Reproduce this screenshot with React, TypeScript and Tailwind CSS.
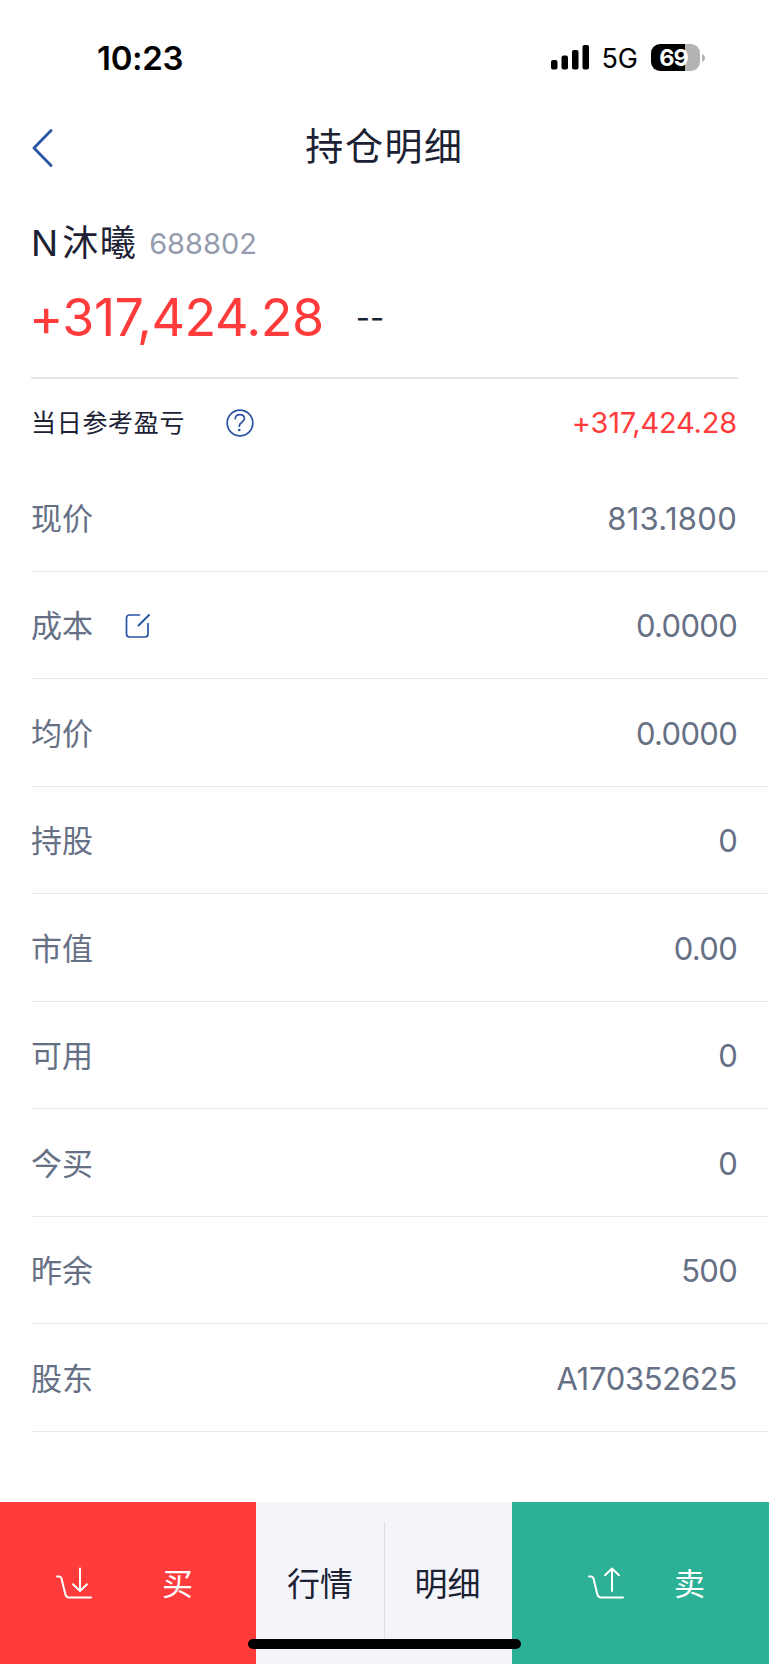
type DetailRow = {
  label: string
  value: string
  editable?: boolean
  valueClass?: string
}

const rows: DetailRow[] = [
  { label: '现价', value: '813.1800', valueClass: 'tracking-[0.3px]' },
  { label: '成本', value: '0.0000', editable: true },
  { label: '均价', value: '0.0000' },
  { label: '持股', value: '0' },
  { label: '市值', value: '0.00' },
  { label: '可用', value: '0' },
  { label: '今买', value: '0' },
  { label: '昨余', value: '500' },
  { label: '股东', value: 'A170352625', valueClass: 'tracking-[-0.3px]' },
]

const SignalIcon = () => (
  <svg width="38" height="25" viewBox="0 0 38 25" fill="#000">
    <rect x="0" y="15" width="6.5" height="9.5" rx="2" />
    <rect x="10.5" y="10.5" width="6.5" height="14" rx="2" />
    <rect x="21" y="5" width="6.5" height="19.5" rx="2" />
    <rect x="31.5" y="0" width="6.5" height="24.5" rx="2" />
  </svg>
)

const Battery = () => (
  <div className="flex items-center">
    <div className="flex h-[27px] w-[49px] items-center justify-center rounded-[9px] bg-[linear-gradient(90deg,#000_69%,#b3b3b3_69%)] pr-[4px] text-[23.5px] leading-[27px] font-bold tracking-[-1px] text-white">
      69
    </div>
    <svg width="3" height="8" viewBox="0 0 3 8" className="ml-[2px]" fill="#b3b3b3">
      <path d="M0 0C4 1.5 4 6.5 0 8Z" />
    </svg>
  </div>
)

const StatusBar = () => (
  <div className="flex h-[107px] items-start justify-between pt-[41px] pr-[64px] pl-[97px] text-black">
    <span className="pt-[1px] text-[33px] leading-[32px] font-semibold tracking-[-0.3px]">10:23</span>
    <div className="flex items-center">
      <SignalIcon />
      <span className="ml-[12px] pt-[3px] text-[27px] leading-[30px]">5G</span>
      <div className="ml-[13px]">
        <Battery />
      </div>
    </div>
  </div>
)

const HelpIcon = () => (
  <svg width="28" height="28" viewBox="0 0 28 28" fill="none" stroke="#2a55a5" strokeWidth="1.7" strokeLinecap="round">
    <circle cx="14" cy="14" r="12.8" />
    <path d="M9.2 9.8C9.4 7.2 11.2 5.7 13.8 5.7C16.5 5.7 18.4 7.3 18.4 9.8C18.4 12.7 13.3 13.4 13.3 17.2" />
    <circle cx="13.3" cy="21" r="1.3" fill="#2a55a5" stroke="none" />
  </svg>
)

const EditIcon = () => (
  <svg width="26" height="26" viewBox="0 0 26 26" fill="none" stroke="#2a55a5" strokeWidth="1.7" strokeLinecap="round">
    <path d="M14.5 2H4.5Q1.5 2 1.5 5V21Q1.5 24 4.5 24H20Q23 24 23 21V10.5" />
    <path d="M13.5 12.5L24 2" strokeWidth="2" />
  </svg>
)

const CartIcon = ({ direction }: { direction: 'in' | 'out' }) => (
  <svg width="36" height="32" viewBox="0 0 36 32" fill="none" stroke="#fff" strokeWidth="2" strokeLinecap="round" strokeLinejoin="round">
    <path d="M1 9.5H3.2Q5 9.5 5.5 11.5L9 26Q9.9 30.5 13 30.5H35" />
    {direction === 'in'
      ? <path d="M24 1.5V24M17 17.2L24 24L31 17.2" />
      : <path d="M24 24V1.5M17 8.3L24 1.5L31 8.3" />}
  </svg>
)

const Header = () => (
  <div className="flex h-[81px] items-center px-[32px] text-[#1c2233]">
    <svg width="21" height="38" viewBox="0 0 21 38" className="mt-[1px]" fill="none" stroke="#2a55a5" strokeWidth="2.8" strokeLinecap="round" strokeLinejoin="round">
      <path d="M19 1.5L2 19L19 36.5" />
    </svg>
    <h1 className="mr-[21px] mb-[3px] flex-1 text-center text-[38px] leading-[40px] tracking-[1.6px]">持仓明细</h1>
  </div>
)

const Summary = () => (
  <div className="mx-[31px] h-[191px] border-b-2 border-[#e5e6ec] pt-[33px] text-[#1c2233]">
    <div className="flex h-[44px] items-center">
      <span className="text-[36px] leading-[44px]">N</span>
      <span className="ml-[4px] text-[36px] leading-[44px] tracking-[1.5px]">沐曦</span>
      <span className="ml-[12px] pt-[2px] text-[29px] text-[#959bad]">688802</span>
    </div>
    <div className="mt-[21px] flex h-[64px] items-center">
      <span className="-ml-[2px] text-[52px] leading-[64px] tracking-[-0.5px] text-[#ff3b3b]">+317,424.28</span>
      <span className="ml-[32px] text-[31px]">--</span>
    </div>
  </div>
)

const DetailItem = ({ label, value, editable, valueClass = 'tracking-[-0.7px]' }: DetailRow) => (
  <div className="ml-[31px] flex h-[107.5px] items-center justify-between border-b border-[#e8e9ec] pt-[3px] pr-[32px] text-[31px] text-[#667085]">
    <div className="flex items-center">
      <span>{label}</span>
      {editable && <span className="ml-[32px]"><EditIcon /></span>}
    </div>
    <span className={valueClass}>{value}</span>
  </div>
)

const BottomBar = () => (
  <div className="relative mt-auto mb-px flex h-[162px] text-[33px] text-[#1c2233]">
    <button className="flex w-[256px] items-center bg-[#ff3b3b] pl-[56px] text-[31px] text-white">
      <CartIcon direction="in" />
      <span className="ml-[70px] pt-[2px]">买</span>
    </button>
    <div className="flex w-[256px] bg-[#f4f5fa]">
      <button className="w-[128px] pt-[3px]">行情</button>
      <div className="mt-[20px] mb-[25px] w-px bg-[#dcdee2]" />
      <button className="w-[127px] pt-[3px] pr-[2px]">明细</button>
    </div>
    <button className="flex flex-1 items-center bg-[#2cb096] pl-[76px] text-[31px] text-white">
      <CartIcon direction="out" />
      <span className="ml-[50px] pt-[2px]">卖</span>
    </button>
    <div className="absolute bottom-[15px] left-[248px] h-[10px] w-[273px] rounded-full bg-black" />
  </div>
)

const App = () => (
  <div className="flex h-[1665px] w-[769px] flex-col overflow-hidden bg-white font-[Inter,'Noto_Sans_CJK_SC',sans-serif]">
    <StatusBar />
    <Header />
    <Summary />
    <div className="flex h-[85px] items-center justify-between pt-[3px] pr-[32px] pl-[31px]">
      <div className="flex items-center text-[25px] text-[#1c2233]">
        <span className="pt-[2px] tracking-[0.7px]">当日参考盈亏</span>
        <span className="ml-[41px]"><HelpIcon /></span>
      </div>
      <span className="text-[29px] tracking-[-0.2px] text-[#ff3b3b]">+317,424.28</span>
    </div>
    <div>
      {rows.map(row => <DetailItem key={row.label} {...row} />)}
    </div>
    <BottomBar />
  </div>
)

export default App
